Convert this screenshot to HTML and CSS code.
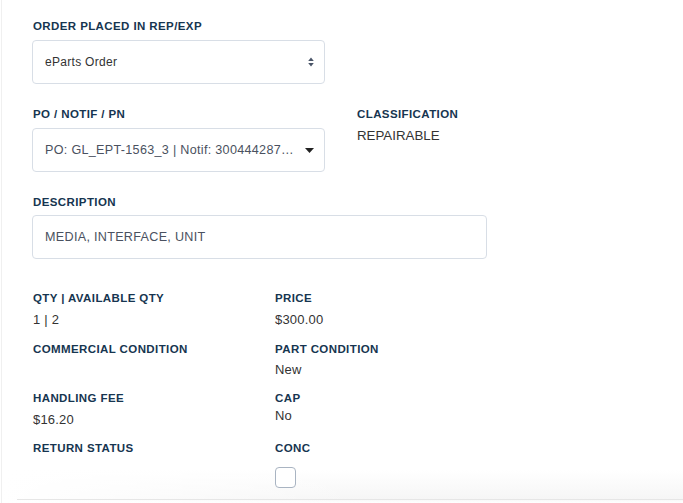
FILE: index.html
```html
<!DOCTYPE html>
<html>
<head>
<meta charset="utf-8">
<link rel="stylesheet" href="styles.css">
</head>
<body>
<div class="page">
  <div class="form">
    <div class="field">
      <div class="label">ORDER PLACED IN REP/EXP</div>
      <div class="control select">
        <span class="text">eParts Order</span>
        <svg class="updown" width="6" height="10" viewBox="0 0 6 10"><path d="M3 0.5L5.8 4H0.2Z M3 9.5L5.8 6H0.2Z" fill="#4a5568"/></svg>
      </div>
    </div>
    <div class="row2">
      <div class="field">
        <div class="label">PO / NOTIF / PN</div>
        <div class="control select">
          <span class="text grey">PO: GL_EPT-1563_3 | Notif: 300444287…</span>
          <svg class="caret" width="9" height="5" viewBox="0 0 9 5"><path d="M0 0H9L4.5 5Z" fill="#222"/></svg>
        </div>
      </div>
      <div class="side">
        <div class="label">CLASSIFICATION</div>
        <div class="big">REPAIRABLE</div>
      </div>
    </div>
    <div class="field">
      <div class="label">DESCRIPTION</div>
      <div class="control wide"><span class="text grey">MEDIA, INTERFACE, UNIT</span></div>
    </div>
    <div class="grid">
      <div class="cell"><div class="label">QTY | AVAILABLE QTY</div><div class="val">1 | 2</div></div>
      <div class="cell"><div class="label">PRICE</div><div class="val">$300.00</div></div>
      <div class="cell"><div class="label">COMMERCIAL CONDITION</div><div class="val"></div></div>
      <div class="cell"><div class="label">PART CONDITION</div><div class="val lower">New</div></div>
      <div class="cell"><div class="label">HANDLING FEE</div><div class="val">$16.20</div></div>
      <div class="cell"><div class="label">CAP</div><div class="val tight">No</div></div>
      <div class="cell"><div class="label">RETURN STATUS</div></div>
      <div class="cell"><div class="label">CONC</div><div class="check"></div></div>
    </div>
  </div>
  <div class="rule"></div>
</div>
</body>
</html>
```
FILE: styles.css
```css
html, body {
  margin: 0;
  padding: 0;
  background: #fff;
}
body {
  font-family: "Liberation Sans", Arial, sans-serif;
  width: 683px;
  height: 503px;
  overflow: hidden;
}
.page {
  height: 503px;
  border-left: 1px solid #f0f0f0;
  margin-left: 1px;
  background:
    linear-gradient(to right, rgba(255,255,255,1) 0px, rgba(255,255,255,0) 360px),
    linear-gradient(to bottom, #fff 0px, #fff 470px, #f6f6f6 499px, #fff 503px);
  display: flex;
  flex-direction: column;
}
.form {
  padding: 19px 0 0 30px;
  flex: 1;
}
.label {
  font-size: 11.5px;
  line-height: 14px;
  font-weight: bold;
  color: #163550;
  letter-spacing: 0.4px;
  padding-left: 1px;
}
.field {
  margin-bottom: 23px;
}
.control {
  margin-top: 6px;
  height: 42px;
  border: 1px solid #d8dee6;
  border-radius: 4px;
  box-sizing: content-box;
  display: flex;
  align-items: center;
  padding: 0 10px 0 12px;
  width: 269px;
}
.field:first-child .control { margin-top: 7px; }
.row2 .control { margin-top: 5px; }
.control.wide { width: 431px; }
.text {
  flex: 1;
  font-size: 12px;
  color: #333;
  letter-spacing: 0.3px;
  white-space: nowrap;
}
.text.grey { color: #4a5160; font-size: 12.6px; letter-spacing: 0.3px; }
.row2 {
  display: flex;
  gap: 32px;
}
.side .label { padding-left: 0; }
.side .big {
  margin-top: 7px;
  font-size: 13.3px;
  color: #333;
}
.grid {
  display: grid;
  grid-template-columns: 242px 243px;
  grid-template-rows: 51px 49px 50px 50px;
  margin-top: 32px;
}
.cell { padding-left: 1px; }
.cell .label { padding-left: 0; }
.val {
  margin-top: 7px;
  font-size: 13px;
  line-height: 16px;
  color: #333;
  letter-spacing: 0.2px;
}
.val.lower { margin-top: 6px; }
.val.tight { margin-top: 3px; }
.check {
  margin-top: 12px;
  width: 19px;
  height: 19px;
  border: 1px solid #a9b4c2;
  border-radius: 4px;
  background: #fff;
}
.rule {
  height: 1px;
  background: #e6e6e6;
  margin: 0 0 3px 15px;
}
```
